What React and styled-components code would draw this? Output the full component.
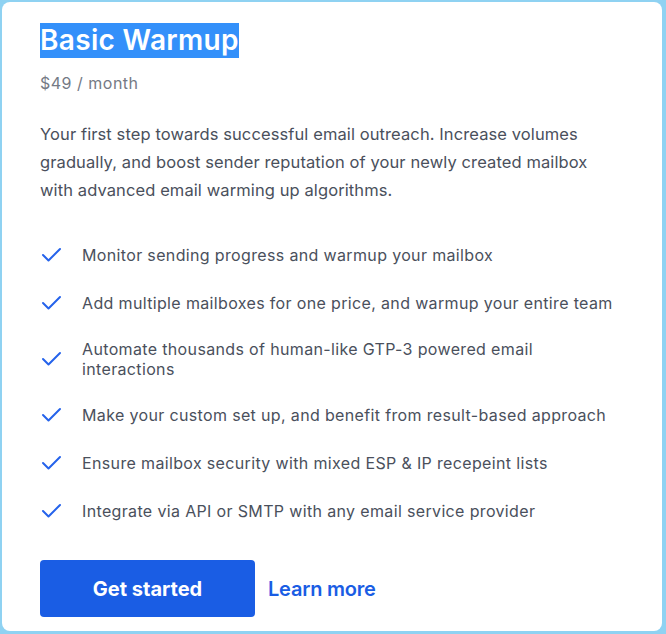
import React from 'react';
import styled, { createGlobalStyle } from 'styled-components';

const GlobalStyle = createGlobalStyle`
  body {
    margin: 0;
    background: #8fd2f2;
    font-family: Inter, "Noto Sans", sans-serif;
  }
`;

const Page = styled.div`
  width: 666px;
  height: 634px;
  padding: 2px 4px 3px 2px;
  box-sizing: border-box;
`;

const Card = styled.div`
  height: 100%;
  box-sizing: border-box;
  background: #ffffff;
  border-radius: 8px;
  padding: 21px 38px 14px 38px;
  display: flex;
  flex-direction: column;
`;

const Title = styled.h1`
  margin: 0;
  font-size: 28px;
  font-weight: 600;
  letter-spacing: 0.33px;
  line-height: 35px;
  height: 35px;
`;

const Selected = styled.span`
  display: inline-block;
  background: #3390fa;
  color: #ffffff;
`;

const Price = styled.div`
  margin-top: 13px;
  font-size: 16px;
  letter-spacing: 0.5px;
  line-height: 24px;
  color: #757a85;
`;

const Description = styled.p`
  margin: 25px 0 0;
  max-width: 600px;
  font-size: 16.5px;
  letter-spacing: 0.1px;
  line-height: 28px;
  color: #4a505c;
`;

const Features = styled.ul`
  list-style: none;
  margin: 39px 0 0;
  padding: 0;
  display: flex;
  flex-direction: column;
  gap: 24px;
`;

const Feature = styled.li`
  display: flex;
  align-items: center;
  min-height: 24px;
  gap: 18px;
`;

const FeatureText = styled.span`
  max-width: 538px;
  font-size: 16px;
  letter-spacing: 0.35px;
  line-height: 20px;
  color: #4a505c;
`;

const Actions = styled.div`
  margin-top: 37px;
  display: flex;
  align-items: center;
  gap: 13px;
`;

const PrimaryButton = styled.button`
  width: 215px;
  height: 57px;
  border: none;
  border-radius: 4px;
  background: #1a5de4;
  color: #ffffff;
  font-family: inherit;
  font-size: 20px;
  font-weight: 700;
  cursor: pointer;
`;

const LinkButton = styled.a`
  color: #1a5de4;
  font-size: 20px;
  font-weight: 600;
  letter-spacing: -0.2px;
  text-decoration: none;
  cursor: pointer;
`;

const CheckIcon = () => (
  <svg width="24" height="24" viewBox="0 0 24 24" fill="none" style={{ flexShrink: 0 }}>
    <path
      d="M3 12 L8.5 17.5 L20 6"
      stroke="#2563eb"
      strokeWidth="2"
      strokeLinecap="round"
      strokeLinejoin="round"
    />
  </svg>
);

const features = [
  'Monitor sending progress and warmup your mailbox',
  'Add multiple mailboxes for one price, and warmup your entire team',
  'Automate thousands of human-like GTP-3 powered email interactions',
  'Make your custom set up, and benefit from result-based approach',
  'Ensure mailbox security with mixed ESP & IP recepeint lists',
  'Integrate via API or SMTP with any email service provider',
];

const App = () => {
  return (
    <Page>
      <GlobalStyle />
      <Card>
        <Title>
          <Selected>Basic Warmup</Selected>
        </Title>
        <Price>$49 / month</Price>
        <Description>
          Your first step towards successful email outreach. Increase volumes gradually, and boost
          sender reputation of your newly created mailbox with advanced email warming up algorithms.
        </Description>
        <Features>
          {features.map((text) => (
            <Feature key={text}>
              <CheckIcon />
              <FeatureText>{text}</FeatureText>
            </Feature>
          ))}
        </Features>
        <Actions>
          <PrimaryButton type="button">Get started</PrimaryButton>
          <LinkButton>Learn more</LinkButton>
        </Actions>
      </Card>
    </Page>
  );
};

export default App;
